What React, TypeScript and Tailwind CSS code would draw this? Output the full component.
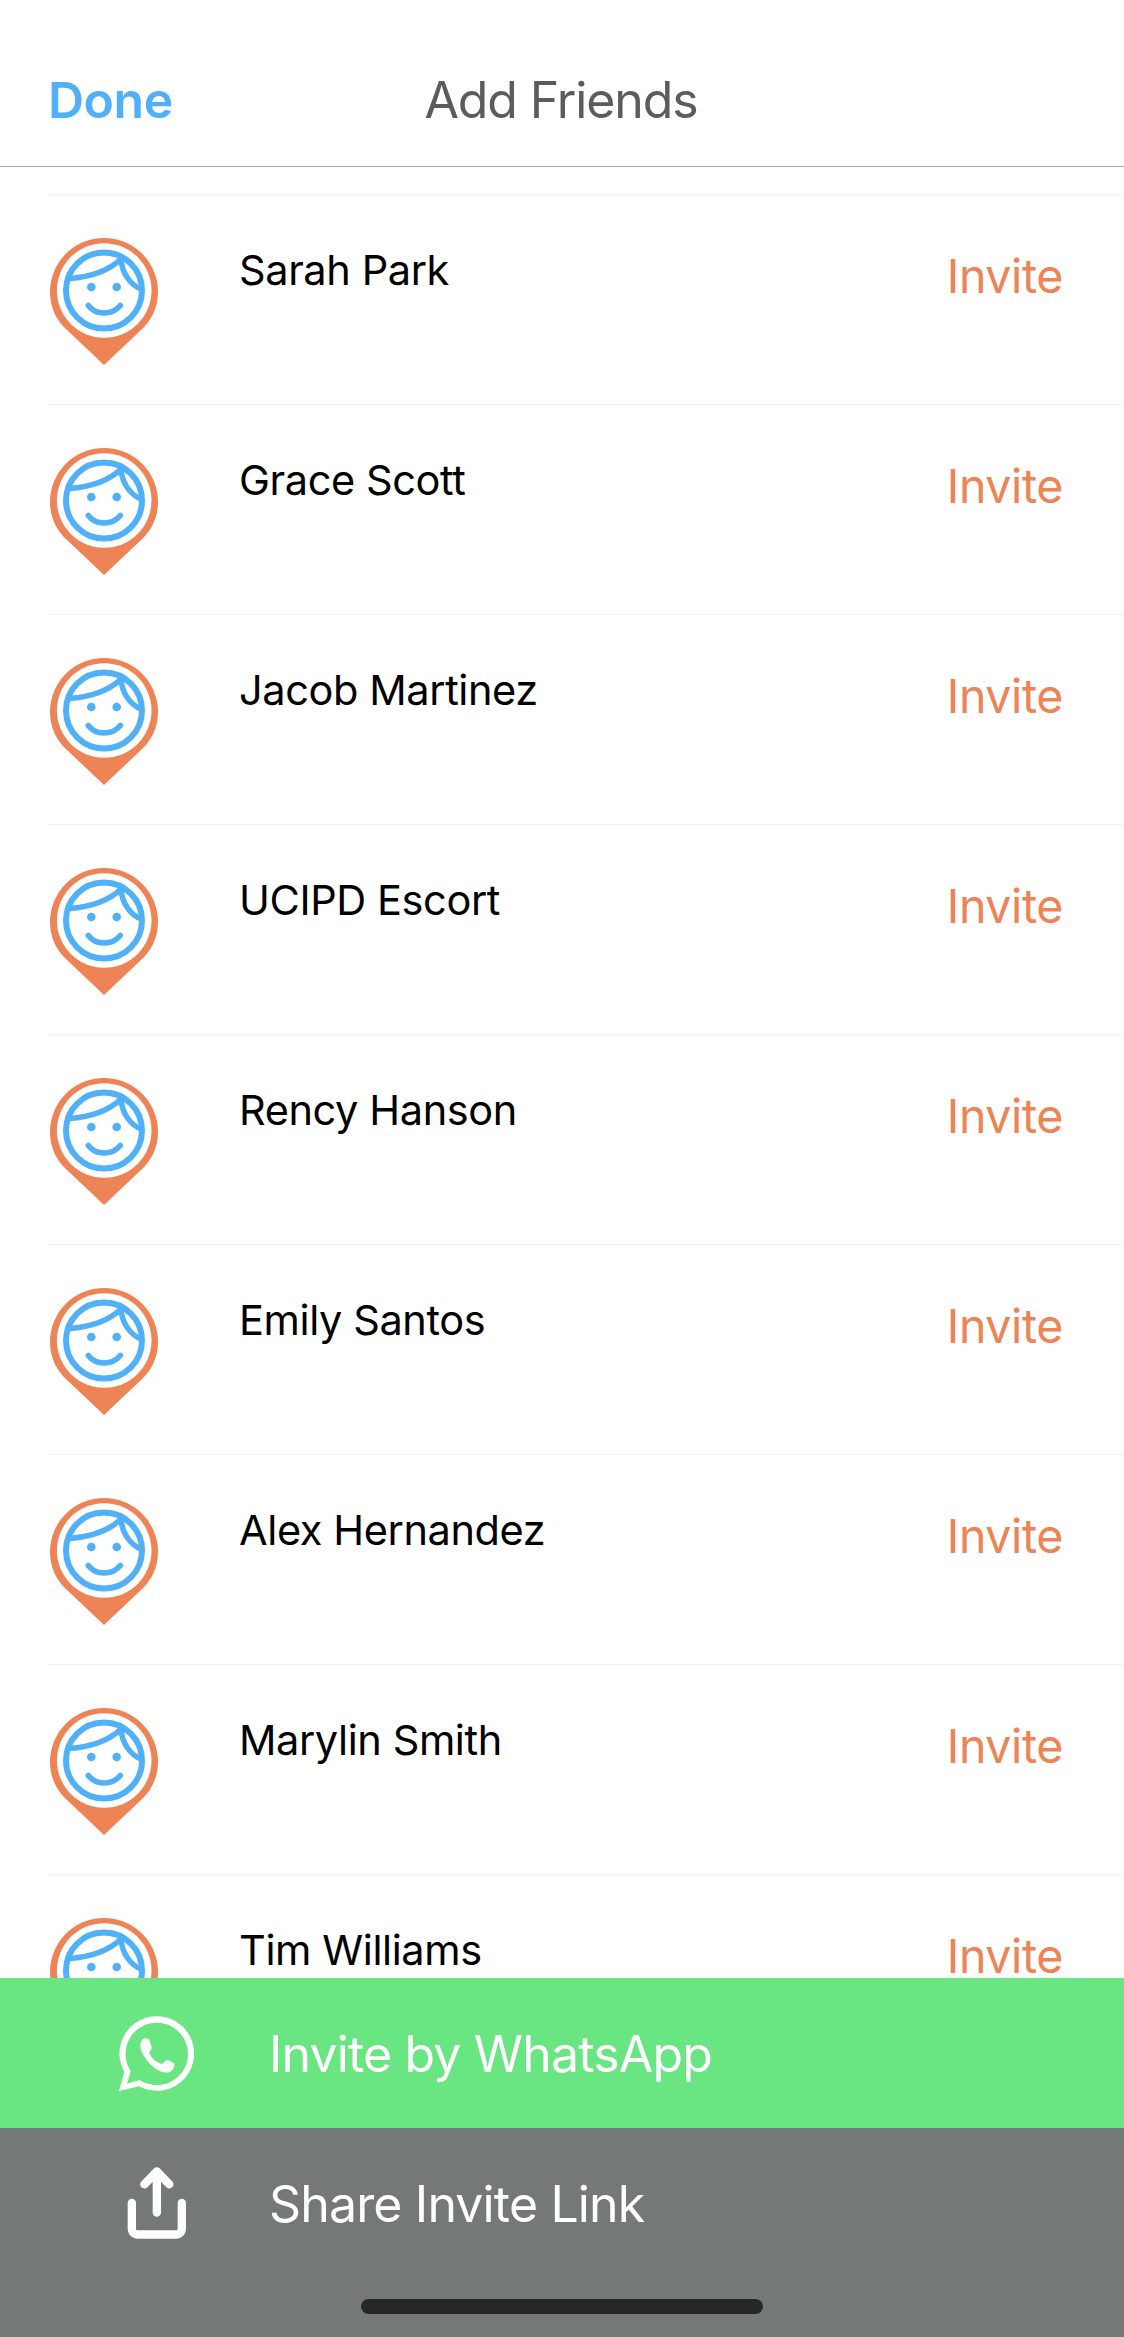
const friends = [
	'Sarah Park',
	'Grace Scott',
	'Jacob Martinez',
	'UCIPD Escort',
	'Rency Hanson',
	'Emily Santos',
	'Alex Hernandez',
	'Marylin Smith',
	'Tim Williams',
];

function PinAvatar() {
	return (
		<svg
			className="mt-[43px] h-[127px] w-[108px] shrink-0"
			viewBox="0 0 108 127"
			fill="none"
		>
			{/* Pin */}
			<path
				d="M54 0 A54 54 0 0 0 0 54 C0 70 7 83 17 92 L54 127 L91 92 C101 83 108 70 108 54 A54 54 0 0 0 54 0Z"
				fill="#ee8455"
			/>
			<circle cx="54.2" cy="52.5" r="47.3" fill="#fff" />

			{/* Face */}
			<g stroke="#50b0fa" strokeWidth="6" strokeLinecap="round">
				<circle cx="54" cy="52.5" r="38" />
				<path
					d="M19 40.5 C41 39 59 32.5 71 21"
					strokeWidth="5.5"
					strokeLinecap="butt"
				/>
				<path
					d="M71 21 C72 35 80 47 92 51.5"
					strokeWidth="5.5"
					strokeLinecap="butt"
				/>
				<path d="M38.3 67.5 C46 77.5 62 77.5 70.3 67.5" strokeWidth="5.6" />
			</g>
			<circle cx="41.3" cy="49" r="4.3" fill="#50b0fa" />
			<circle cx="66.7" cy="49" r="4.3" fill="#50b0fa" />
		</svg>
	);
}

function WhatsAppIcon() {
	return (
		<svg className="h-[75px] w-[75px]" viewBox="88 75 225 225" fill="#fff">
			<path
				fillRule="evenodd"
				d="M88 300 L104 243 A112 112 0 1 1 148 286 Z M112 278 L150 267 A93.5 93.5 0 1 0 123 240 Z"
			/>
			<path d="M160 143 Q152 150 152 164 C153 190 180 222 205 238 Q225 248 240 243 Q253 237 255 218 Q245 212 234 206 Q229 206 226 211 L217 220 Q190 210 178 185 L186 172 Q186 165 178 145 Q170 140 160 143Z" />
		</svg>
	);
}

function ShareIcon() {
	return (
		<svg
			className="h-[74px] w-[62px]"
			viewBox="107 78 186 222"
			fill="none"
			stroke="#fff"
			strokeWidth="25"
			strokeLinecap="round"
			strokeLinejoin="round"
		>
			<path d="M124.5 189 V264 Q124.5 283.5 144 283.5 H255 Q274.5 283.5 274.5 264 V189" />
			<path d="M199.5 218 V94 M162 133 L199.5 94 L237 133" />
		</svg>
	);
}

export default function App() {
	return (
		<div className="flex h-[2337px] w-[1124px] flex-col overflow-hidden bg-white font-['Inter',sans-serif]">
			<header className="grid h-[167px] shrink-0 grid-cols-3 items-center border-b border-[#acacac] px-12 pt-[34px] text-[50px] leading-[60px] whitespace-nowrap">
				<button className="text-left font-semibold tracking-[-0.5px] text-[#50b0fa]">
					Done
				</button>
				<h1 className="pr-0.5 text-center tracking-[-1.1px] text-[#5c5c5c]">
					Add Friends
				</h1>
			</header>

			<main className="min-h-0 flex-1 overflow-hidden pt-[27px]">
				{friends.map((name) => (
					<div
						key={name}
						className="ml-12 flex h-[210px] items-start border-t border-[#f3f3f3] pl-0.5"
					>
						<PinAvatar />
						<span className="mt-[45px] ml-[81px] text-[41.5px] leading-[60px] tracking-[-0.4px] text-black">
							{name}
						</span>
						<button className="mt-[61px] mr-[61px] ml-auto text-[46.5px] leading-[40px] tracking-[-0.4px] text-[#ee8455]">
							Invite
						</button>
					</div>
				))}
			</main>

			<footer className="shrink-0 text-[50px] leading-[60px] tracking-[-0.85px] text-white">
				<button className="flex h-[150px] w-full items-center bg-[#69e581]">
					<span className="flex w-[269px] pl-[119px]">
						<WhatsAppIcon />
					</span>
					<span className="pt-0.5">Invite by WhatsApp</span>
				</button>
				<div className="h-[209px] bg-[#747878]">
					<button className="flex h-[150px] w-full items-center">
						<span className="flex w-[269px] pl-[126px]">
							<ShareIcon />
						</span>
						<span className="pt-px">Share Invite Link</span>
					</button>
					<div className="mx-auto mt-[21px] h-[15px] w-[402px] rounded-full bg-[#272727]" />
				</div>
			</footer>
		</div>
	);
}
